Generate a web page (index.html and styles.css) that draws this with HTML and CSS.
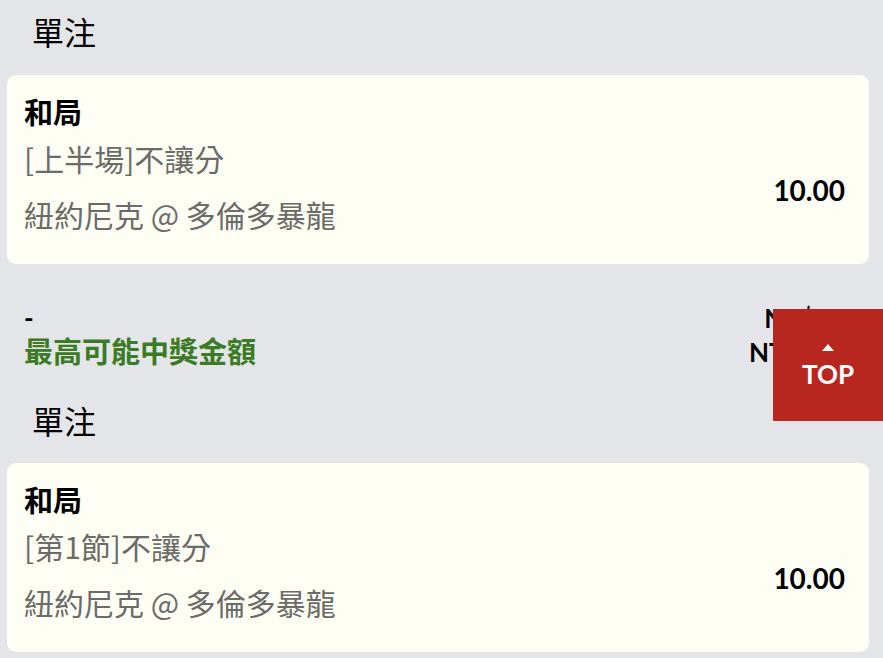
FILE: index.html
```html
<!DOCTYPE html>
<html lang="zh-Hant">
<head>
<meta charset="utf-8">
<title>單注</title>
<link rel="stylesheet" href="styles.css">
</head>
<body>
<div class="page">
  <section class="bet">
    <div class="bet-type">單注</div>
    <div class="card">
      <div class="pick">和局</div>
      <div class="card-row">
        <div class="details">
          <div class="market">[上半場]不讓分</div>
          <div class="match">紐約尼克 @ 多倫多暴龍</div>
        </div>
        <div class="odds">10.00</div>
      </div>
    </div>
  </section>

  <div class="summary">
    <div class="summary-row">
      <span class="dash">-</span>
      <span class="amount">NT$10</span>
    </div>
    <div class="summary-row">
      <span class="label">最高可能中獎金額</span>
      <span class="amount">NT$100</span>
    </div>
  </div>

  <section class="bet bet-next">
    <div class="bet-type">單注</div>
    <div class="card">
      <div class="pick">和局</div>
      <div class="card-row">
        <div class="details">
          <div class="market">[第1節]不讓分</div>
          <div class="match">紐約尼克 @ 多倫多暴龍</div>
        </div>
        <div class="odds">10.00</div>
      </div>
    </div>
  </section>
</div>

<button class="top-btn" type="button">
  <span class="top-arrow"></span>
  <span class="top-text">TOP</span>
</button>
</body>
</html>
```

FILE: styles.css
```css
* {
  box-sizing: border-box;
}

html, body {
  margin: 0;
  padding: 0;
}

body {
  background: #e4e5e8;
  font-family: Lato, "Noto Sans CJK TC", sans-serif;
  color: #000;
  overflow: hidden;
}

.page {
  padding: 9px 14px 0 7px;
}

.bet-type {
  font-size: 32px;
  line-height: 48px;
  padding-left: 25px;
  font-weight: 400;
}

.card {
  margin-top: 18px;
  background: #fffef5;
  border-radius: 9px;
  padding: 18px 24px 22px 17px;
}

.pick {
  font-size: 29px;
  line-height: 40px;
  font-weight: 700;
  margin-bottom: -3px;
}

.card-row {
  display: flex;
  align-items: center;
  justify-content: space-between;
}

.details {
  font-family: "Noto Sans CJK TC", Lato, sans-serif;
  font-size: 30px;
  line-height: 56px;
  color: #6b6b68;
}

.odds {
  font-size: 28px;
  line-height: 40px;
  font-weight: 700;
  padding-top: 8px;
}

.summary {
  margin-top: 37px;
  padding: 0 24px 0 17px;
}

.summary-row {
  display: flex;
  justify-content: space-between;
  align-items: center;
  height: 34px;
}

.dash {
  font-size: 26px;
  font-weight: 700;
  line-height: 34px;
}

.label {
  font-size: 29px;
  font-weight: 700;
  line-height: 34px;
  color: #3b7b25;
}

.amount {
  font-size: 26px;
  font-weight: 700;
  line-height: 34px;
}

.bet-next {
  margin-top: 29px;
}

.bet-next .card {
  margin-top: 17px;
}

.top-btn {
  position: absolute;
  top: 309px;
  right: 0;
  width: 110px;
  height: 112px;
  border: 0;
  padding: 0;
  margin: 0;
  background: #b7271f;
  color: #fff;
  display: flex;
  flex-direction: column;
  align-items: center;
  justify-content: flex-start;
  padding-top: 35px;
  font-family: Lato, sans-serif;
}

.top-arrow {
  width: 0;
  height: 0;
  border-left: 6px solid transparent;
  border-right: 6px solid transparent;
  border-bottom: 7px solid #fff;
}

.top-text {
  font-size: 26px;
  font-weight: 700;
  line-height: 30px;
  margin-top: 8px;
}
```
